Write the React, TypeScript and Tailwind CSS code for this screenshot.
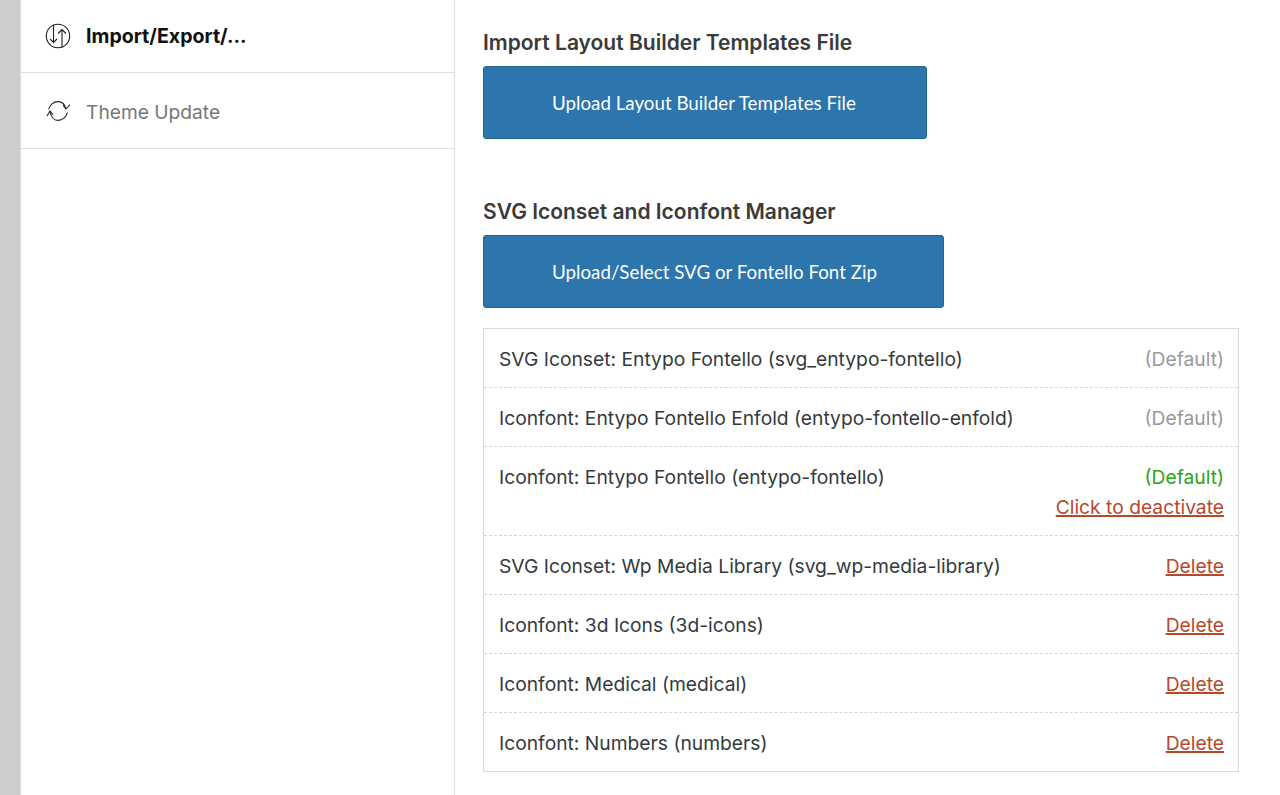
const FONT = "font-['Inter','Noto_Sans',sans-serif]";

const ICON_ROWS = [
  { name: "SVG Iconset: Entypo Fontello (svg_entypo-fontello)", status: "muted" },
  { name: "Iconfont: Entypo Fontello Enfold (entypo-fontello-enfold)", status: "muted" },
  { name: "Iconfont: Entypo Fontello (entypo-fontello)", status: "active" },
  { name: "SVG Iconset: Wp Media Library (svg_wp-media-library)", status: "delete" },
  { name: "Iconfont: 3d Icons (3d-icons)", status: "delete" },
  { name: "Iconfont: Medical (medical)", status: "delete" },
  { name: "Iconfont: Numbers (numbers)", status: "delete" },
];

function ImportIcon() {
  return (
    <svg className="mb-[2px]" width="26" height="26" viewBox="0 0 26 26" fill="none" stroke="#222" strokeWidth="1.1">
      <circle cx="13" cy="13" r="11.7" />
      <path d="M8.5 1.5V19.5M5 16L8.5 19.5L12 16" />
      <path d="M17 24.5V6.5M13 10.5L17 6.5L21 10.5" />
    </svg>
  );
}

function UpdateIcon() {
  return (
    <svg className="mb-[3px]" width="26" height="26" viewBox="0 0 26 26" fill="none" stroke="#222" strokeWidth="1.1">
      <path d="M3.6 11.5C4.6 7 8.5 3.6 13 3.6C16.8 3.6 20 6.5 21 11" />
      <path d="M18 7.2L21 11L25 6.6" />
      <path d="M22.4 14.5C21.4 19 17.5 22.4 13 22.4C9.2 22.4 6 19.5 5 13" />
      <path d="M2 18L5 13L8.2 17" />
    </svg>
  );
}

function Status({ status }: { status: string }) {
  if (status === "muted") {
    return <span className="text-[#999]">(Default)</span>;
  }
  if (status === "active") {
    return (
      <div className="flex flex-col items-end gap-[3px]">
        <span className="text-[#2ea313]">(Default)</span>
        <a className="text-[#b7482a] underline decoration-[1.5px]">Click to deactivate</a>
      </div>
    );
  }
  return <a className="text-[#b7482a] underline decoration-[1.5px]">Delete</a>;
}

function UploadButton({ label, width }: { label: string; width: string }) {
  return (
    <button
      className={`block h-[73px] ${width} rounded-[3px] border border-[#23668f] bg-[#2c75ad] pt-[2px] pl-[68px] text-left font-['Lato','Noto_Sans',sans-serif] text-[18.75px] text-white`}
    >
      {label}
    </button>
  );
}

export default function App() {
  return (
    <div className={`flex h-[795px] w-[1280px] overflow-hidden bg-white ${FONT}`}>
      <div className="w-5 bg-[#cdcdcd]" />

      {/* Sidebar */}
      <div className="w-[435px] border-x border-[#dcdcdc]">
        <div className="flex h-[73px] items-center gap-[15px] border-b border-[#e0e0e0] pt-[2px] pl-6 text-[19.6px] font-bold text-[#111]">
          <ImportIcon />
          <span>Import/Export/...</span>
        </div>
        <div className="flex h-[76px] items-center gap-[15px] border-b border-[#e0e0e0] pt-[4px] pl-6 text-[19.2px] text-[#777]">
          <UpdateIcon />
          <span>Theme Update</span>
        </div>
      </div>

      {/* Main */}
      <div className="flex-1 pl-[28px] pt-[30px]">
        <h2 className="text-[21px] leading-[26px] font-semibold text-[#3a3a3a]">Import Layout Builder Templates File</h2>
        <div className="mt-[10px]">
          <UploadButton label="Upload Layout Builder Templates File" width="w-[444px]" />
        </div>
        <h2 className="mt-[60px] text-[21px] leading-[26px] font-semibold text-[#3a3a3a]">SVG Iconset and Iconfont Manager</h2>
        <div className="mt-[10px]">
          <UploadButton label="Upload/Select SVG or Fontello Font Zip" width="w-[461px]" />
        </div>

        <div className="mt-5 w-[756px] border border-[#dadada] text-[19.25px] text-[#333a40]">
          {ICON_ROWS.map((row) => (
            <div
              key={row.name}
              className="flex justify-between border-b border-dashed border-[#d6d6d6] pt-[17px] pr-[14px] pb-[14px] pl-[15px] leading-[27px] last:border-b-0"
            >
              <span>{row.name}</span>
              <Status status={row.status} />
            </div>
          ))}
        </div>
      </div>
    </div>
  );
}
